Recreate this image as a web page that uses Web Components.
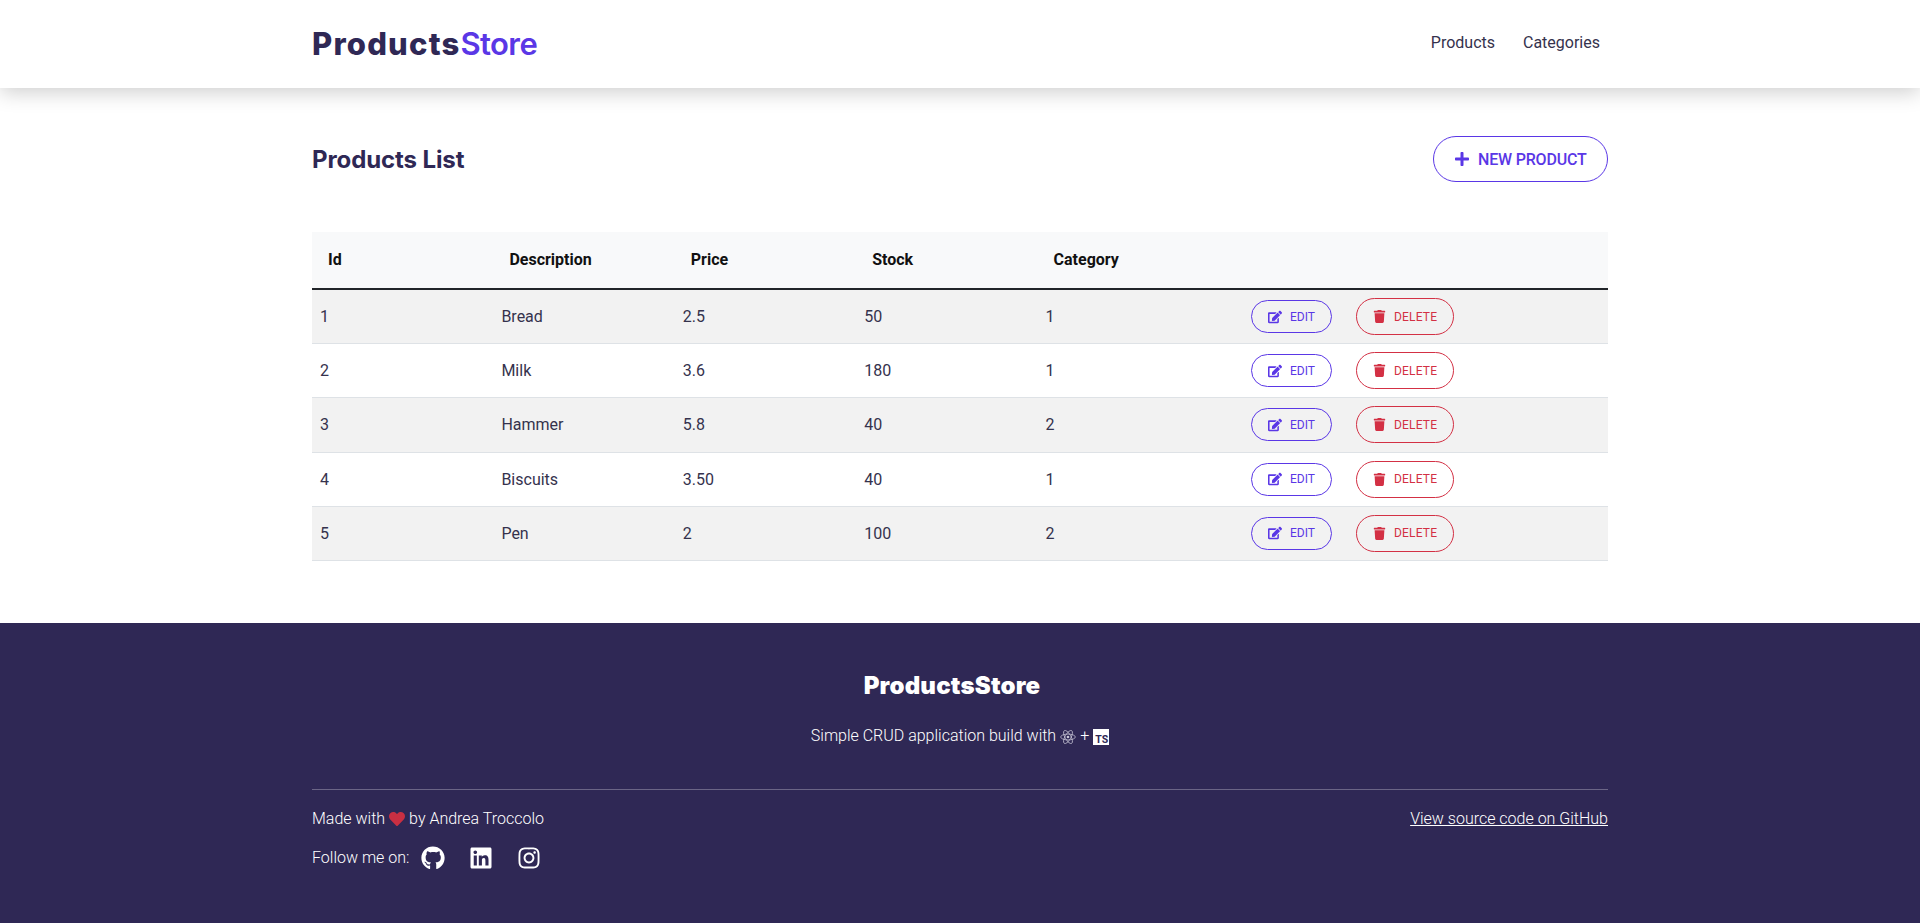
<!DOCTYPE html>
<html lang="en">
<head>
<meta charset="utf-8">
<title>ProductsStore</title>
<style>
  html, body { margin: 0; padding: 0; background: #fff; }
  body { font-family: Roboto, "Liberation Sans", sans-serif; color: #2f2855; }
</style>
</head>
<body>
<site-navbar></site-navbar>
<products-page>
  <product-row pid="1" description="Bread" price="2.5" stock="50" category="1"></product-row>
  <product-row pid="2" description="Milk" price="3.6" stock="180" category="1"></product-row>
  <product-row pid="3" description="Hammer" price="5.8" stock="40" category="2"></product-row>
  <product-row pid="4" description="Biscuits" price="3.50" stock="40" category="1"></product-row>
  <product-row pid="5" description="Pen" price="2" stock="100" category="2"></product-row>
</products-page>
<site-footer></site-footer>

<script>
const icons = {
  plus: ["0 0 448 512", "M416 208H272V64c0-17.67-14.33-32-32-32h-32c-17.67 0-32 14.33-32 32v144H32c-17.67 0-32 14.33-32 32v32c0 17.67 14.33 32 32 32h144v144c0 17.67 14.33 32 32 32h32c17.67 0 32-14.33 32-32V304h144c17.67 0 32-14.33 32-32v-32c0-17.67-14.33-32-32-32z"],
  edit: ["0 0 576 512", "M402.6 83.2l90.2 90.2c3.8 3.8 3.8 10 0 13.8L274.4 405.6l-92.8 10.3c-12.4 1.4-22.9-9.1-21.5-21.5l10.3-92.8L388.8 83.2c3.8-3.8 10-3.8 13.8 0zm162-22.9l-48.8-48.8c-15.2-15.2-39.9-15.2-55.2 0l-35.4 35.4c-3.8 3.8-3.8 10 0 13.8l90.2 90.2c3.8 3.8 10 3.8 13.8 0l35.4-35.4c15.2-15.3 15.2-40 0-55.2zM384 346.2V448H64V128h229.8c3.2 0 6.2-1.3 8.5-3.5l40-40c7.6-7.6 2.2-20.5-8.5-20.5H48C21.5 64 0 85.5 0 112v352c0 26.5 21.5 48 48 48h352c26.5 0 48-21.5 48-48V306.2c0-10.7-12.9-16-20.5-8.5l-40 40c-2.2 2.3-3.5 5.3-3.5 8.5z"],
  trash: ["0 0 448 512", "M432 32H312l-9.4-18.7A24 24 0 0 0 281.1 0H166.8a23.72 23.72 0 0 0-21.4 13.3L136 32H16A16 16 0 0 0 0 48v32a16 16 0 0 0 16 16h416a16 16 0 0 0 16-16V48a16 16 0 0 0-16-16zM53.2 467a48 48 0 0 0 47.9 45h245.8a48 48 0 0 0 47.9-45L416 128H32z"],
  heart: ["0 0 512 512", "M462.3 62.6C407.5 15.9 326 24.3 275.7 76.2L256 96.5l-19.7-20.3C186.1 24.3 104.5 15.9 49.7 62.6c-62.8 53.6-66.1 149.8-9.9 207.9l193.5 199.8c12.5 12.9 32.8 12.9 45.3 0l193.5-199.8c56.3-58.1 53-154.3-9.8-207.9z"],
  github: ["0 0 496 512", "M165.9 397.4c0 2-2.3 3.6-5.2 3.6-3.3 0-5.6-1.6-5.6-3.6 0-2 2.3-3.6 5.2-3.6 3-.3 5.6 1.3 5.6 3.6zm-31.1-4.5c-.7 2 1.3 4.3 4.3 4.9 2.6 1 5.6 0 6.2-2s-1.3-4.3-4.3-5.2c-2.6-.7-5.5.3-6.2 2.3zm44.2-1.7c-2.9.7-4.9 2.6-4.6 4.9.3 2 2.9 3.3 5.9 2.6 2.9-.7 4.9-2.6 4.6-4.6-.3-1.9-3-3.2-5.9-2.9zM244.8 8C106.1 8 0 113.3 0 252c0 110.9 69.8 205.8 169.5 239.2 12.8 2.3 17.3-5.6 17.3-12.1 0-6.2-.3-40.4-.3-61.4 0 0-70 15-84.7-29.8 0 0-11.4-29.1-27.8-36.6 0 0-22.9-15.7 1.6-15.4 0 0 24.9 2 38.6 25.8 21.9 38.6 58.6 27.5 72.9 20.9 2.3-16 8.8-27.1 16-33.7-55.9-6.2-112.3-14.3-112.3-110.5 0-27.5 7.6-41.3 23.6-58.9-2.6-6.5-11.1-33.3 8.7-67.9 20.9-6.5 69 27 69 27 20-5.6 41.5-8.5 62.8-8.5s42.8 2.9 62.8 8.5c0 0 48.1-33.6 69-27 13.7 34.7 5.2 61.4 2.6 67.9 16 17.7 25.8 31.5 25.8 58.9 0 96.5-58.9 104.2-114.8 110.5 9.2 7.9 17 22.9 17 46.4 0 33.7-.3 75.4-.3 83.6 0 6.5 4.6 14.4 17.3 12.1C428.2 457.8 496 362.9 496 252 496 113.3 383.5 8 244.8 8zM97.2 352.9c-1.3 1-1 3.3.7 5.2 1.6 1.6 3.9 2.3 5.2 1 1.3-1 1-3.3-.7-5.2-1.6-1.6-3.9-2.3-5.2-1zm-10.8-8.1c-.7 1.3.3 2.9 2.3 3.9 1.6 1 3.6.7 4.3-.7.7-1.3-.3-2.9-2.3-3.9-2-.6-3.6-.3-4.3.7zm32.4 35.6c-1.6 1.3-1 4.3 1.3 6.2 2.3 2.3 5.2 2.6 6.5 1 1.3-1.3.7-4.3-1.3-6.2-2.2-2.3-5.2-2.6-6.5-1zm-11.4-14.7c-1.6 1-1.6 3.6 0 5.9 1.6 2.3 4.3 3.3 5.6 2.3 1.6-1.3 1.6-3.9 0-6.2-1.4-2.3-4-3.3-5.6-2z"],
  linkedin: ["0 0 448 512", "M416 32H31.9C14.3 32 0 46.5 0 64.3v383.4C0 465.5 14.3 480 31.9 480H416c17.6 0 32-14.5 32-32.3V64.3c0-17.8-14.4-32.3-32-32.3zM135.4 416H69V202.2h66.5V416zm-33.2-243c-21.3 0-38.5-17.3-38.5-38.5S80.9 96 102.2 96c21.2 0 38.5 17.3 38.5 38.5 0 21.3-17.2 38.5-38.5 38.5zm282.1 243h-66.4V312c0-24.8-.5-56.7-34.5-56.7-34.6 0-39.9 27-39.9 54.9V416h-66.4V202.2h63.7v29.2h.9c8.9-16.8 30.6-34.5 62.9-34.5 67.2 0 79.7 44.3 79.7 101.9V416z"],
  instagram: ["0 0 448 512", "M224.1 141c-63.6 0-114.9 51.3-114.9 114.9s51.3 114.9 114.9 114.9S339 319.5 339 255.9 287.7 141 224.1 141zm0 189.6c-41.1 0-74.7-33.5-74.7-74.7s33.5-74.7 74.7-74.7 74.7 33.5 74.7 74.7-33.6 74.7-74.7 74.7zm146.4-194.3c0 14.9-12 26.8-26.8 26.8-14.9 0-26.8-12-26.8-26.8s12-26.8 26.8-26.8 26.8 12 26.8 26.8zm76.1 27.2c-1.7-35.9-9.9-67.7-36.2-93.9-26.2-26.2-58-34.4-93.9-36.2-37-2.1-147.9-2.1-184.9 0-35.8 1.7-67.6 9.9-93.9 36.1s-34.4 58-36.2 93.9c-2.1 37-2.1 147.9 0 184.9 1.7 35.9 9.9 67.7 36.2 93.9s58 34.4 93.9 36.2c37 2.1 147.9 2.1 184.9 0 35.9-1.7 67.7-9.9 93.9-36.2 26.2-26.2 34.4-58 36.2-93.9 2.1-37 2.1-147.8 0-184.8zM398.8 388c-7.8 19.6-22.9 34.7-42.6 42.6-29.5 11.7-99.5 9-132.1 9s-102.7 2.6-132.1-9c-19.6-7.8-34.7-22.9-42.6-42.6-11.7-29.5-9-99.5-9-132.1s-2.6-102.7 9-132.1c7.8-19.6 22.9-34.7 42.6-42.6 29.5-11.7 99.5-9 132.1-9s102.7-2.6 132.1 9c19.6 7.8 34.7 22.9 42.6 42.6 11.7 29.5 9 99.5 9 132.1s2.7 102.7-9 132.1z"]
};

function icon(name, size, color) {
  const [box, d] = icons[name];
  return `<svg width="${size}" height="${size}" viewBox="${box}" fill="${color || "currentColor"}" style="display:block;flex:none"><path d="${d}"/></svg>`;
}

class SiteNavbar extends HTMLElement {
  constructor() {
    super();
    this.attachShadow({ mode: "open" });
    this.shadowRoot.innerHTML = `
      <style>
        :host {
          display: block;
          position: relative;
          height: 88px;
          background: #fff;
          box-shadow: 0 4px 20px rgba(0, 0, 0, 0.2);
        }
        nav {
          width: 1296px;
          height: 100%;
          margin: 0 auto;
          display: flex;
          align-items: center;
          justify-content: space-between;
        }
        .logo {
          margin-top: -2px;
          font-family: Inter, Roboto, sans-serif;
          font-size: 31px;
          font-weight: 800;
          letter-spacing: 1.2px;
          color: #2f2855;
        }
        .logo span { color: #5a37e6; font-weight: 600; letter-spacing: -0.6px; }
        .links { display: flex; gap: 28px; padding-right: 8px; margin-top: -4px; }
        a { font-size: 16px; color: #35324d; text-decoration: none; }
      </style>
      <nav>
        <div class="logo">Products<span>Store</span></div>
        <div class="links"><a href="#">Products</a><a href="#">Categories</a></div>
      </nav>`;
  }
}

class ActionButton extends HTMLElement {
  constructor() {
    super();
    this.attachShadow({ mode: "open" });
    const name = this.getAttribute("icon");
    const size = this.getAttribute("size");
    this.shadowRoot.innerHTML = `
      <style>
        :host {
          display: inline-flex;
          box-sizing: border-box;
          align-items: center;
          gap: var(--gap, 8px);
          padding: 0 var(--pad, 16px);
          height: var(--h, 33px);
          border: 1px solid currentColor;
          border-radius: 24px;
          font-family: Roboto, sans-serif;
          font-size: var(--fs, 12px);
          font-weight: var(--fw, 400);
          letter-spacing: var(--ls, 0);
          color: var(--c, #5a37e6);
          text-transform: uppercase;
          white-space: nowrap;
        }
      </style>
      ${icon(name, size)}<slot></slot>`;
  }
}

class ProductRow extends HTMLElement {
  constructor() {
    super();
    this.attachShadow({ mode: "open" });
    const a = (n) => this.getAttribute(n);
    this.shadowRoot.innerHTML = `
      <style>
        :host {
          display: grid;
          grid-template-columns: repeat(5, 181.4px) 1fr;
          align-items: center;
          box-sizing: border-box;
          height: 54.2px;
          border-bottom: 1px solid #dee2e6;
          background: var(--row-bg, #fff);
          font-size: 16px;
          color: #35324d;
        }
        div { padding-left: 8px; }
        .actions {
          display: flex;
          align-items: center;
          gap: 24px;
          padding-left: 32px;
        }
        .del { --c: #d33044; --h: 37px; --ls: 0.2px; }
      </style>
      <div>${a("pid")}</div><div>${a("description")}</div><div>${a("price")}</div><div>${a("stock")}</div><div>${a("category")}</div>
      <div class="actions">
        <action-button icon="edit" size="14">Edit</action-button>
        <action-button class="del" icon="trash" size="13">Delete</action-button>
      </div>`;
  }
}

class ProductsPage extends HTMLElement {
  constructor() {
    super();
    this.attachShadow({ mode: "open" });
    this.shadowRoot.innerHTML = `
      <style>
        :host {
          display: block;
          width: 1296px;
          margin: 0 auto;
          padding: 48px 0 62px;
        }
        .head {
          display: flex;
          align-items: center;
          justify-content: space-between;
          margin-bottom: 50px;
        }
        h2 {
          margin: 0;
          font-family: Inter, Roboto, sans-serif;
          font-size: 24px;
          font-weight: 700;
          letter-spacing: -0.1px;
          color: #2f2855;
        }
        .new {
          --h: 46px; --fs: 16px; --fw: 500; --pad: 20.5px; --ls: -0.2px;
        }
        .cols {
          display: grid;
          grid-template-columns: repeat(5, 181.4px) 1fr;
          align-items: center;
          height: 55px;
          padding-bottom: 1px;
          background: #f8f9fa;
          border-bottom: 2px solid #212529;
          font-size: 16px;
          font-weight: 700;
          color: #111;
        }
        .cols div { padding-left: 16px; }
        ::slotted(product-row:nth-child(odd)) { --row-bg: #f2f2f2; }
      </style>
      <div class="head">
        <h2>Products List</h2>
        <action-button class="new" icon="plus" size="16">New Product</action-button>
      </div>
      <div class="cols"><div>Id</div><div>Description</div><div>Price</div><div>Stock</div><div>Category</div><div></div></div>
      <slot></slot>`;
  }
}

class SiteFooter extends HTMLElement {
  constructor() {
    super();
    this.attachShadow({ mode: "open" });
    this.shadowRoot.innerHTML = `
      <style>
        :host {
          display: block;
          height: 300px;
          background: #2f2855;
          color: #fff;
          font-family: Roboto, sans-serif;
          font-size: 16px;
          font-weight: 300;
          overflow: hidden;
        }
        .wrap { width: 1296px; margin: 0 auto; }
        h3 {
          margin: 48px 0 0;
          padding-right: 16px;
          text-align: center;
          font-family: Inter, Roboto, sans-serif;
          font-size: 24px;
          line-height: 30px;
          font-weight: 900;
          letter-spacing: 0.2px;
        }
        .tag {
          display: flex;
          justify-content: center;
          align-items: center;
          gap: 4px;
          margin-top: 23px;
          line-height: 24px;
        }
        .ts {
          display: flex;
          justify-content: flex-end;
          align-items: flex-end;
          box-sizing: border-box;
          width: 16px;
          height: 16px;
          margin-top: 2px;
          padding-right: 1px;
          background: #fff;
          color: #2f2855;
          font: 700 10.5px/11px Roboto, sans-serif;
        }
        hr { border: 0; border-top: 1px solid #6b6586; margin: 41px 0 0; }
        .made {
          display: flex;
          justify-content: space-between;
          margin-top: 17px;
          line-height: 24px;
        }
        .made > div { display: flex; align-items: center; gap: 4px; }
        a { color: #fff; }
        .follow { display: flex; align-items: center; margin-top: 15px; height: 24px; }
        .follow .ic { margin-left: 24px; }
        .follow .ic.first { margin-left: 12px; }
      </style>
      <div class="wrap">
        <h3>ProductsStore</h3>
        <div class="tag">
          <span>Simple CRUD application build with</span>
          <svg width="16" height="16" viewBox="-12 -12 24 24" fill="none" stroke="#c9c7d6" stroke-width="1.1" style="margin-top:2px">
            <ellipse rx="11" ry="4.4"/><ellipse rx="11" ry="4.4" transform="rotate(60)"/><ellipse rx="11" ry="4.4" transform="rotate(120)"/><circle r="2" fill="#c9c7d6" stroke="none"/>
          </svg>
          <span>+</span>
          <span class="ts">TS</span>
        </div>
        <hr>
        <div class="made">
          <div>Made with ${icon("heart", 16, "#c92f42")} by Andrea Troccolo</div>
          <a href="#">View source code on GitHub</a>
        </div>
        <div class="follow">
          <span>Follow me on:</span>
          <span class="ic first">${icon("github", 24)}</span>
          <span class="ic">${icon("linkedin", 24)}</span>
          <span class="ic">${icon("instagram", 24)}</span>
        </div>
      </div>`;
  }
}

customElements.define("site-navbar", SiteNavbar);
customElements.define("action-button", ActionButton);
customElements.define("product-row", ProductRow);
customElements.define("products-page", ProductsPage);
customElements.define("site-footer", SiteFooter);
</script>
</body>
</html>
